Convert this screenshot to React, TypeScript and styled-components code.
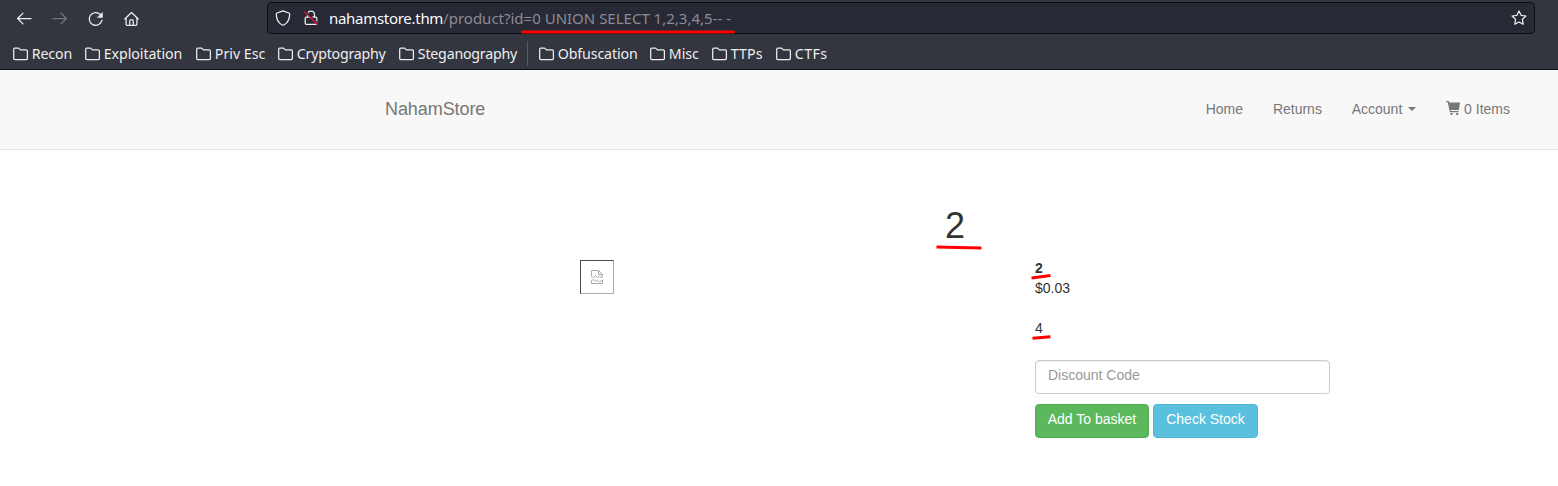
import React from 'react';
import styled, { createGlobalStyle } from 'styled-components';

const GlobalStyle = createGlobalStyle`
  *, *::before, *::after { box-sizing: border-box; }
  body { margin: 0; background: #fff; overflow: hidden; }
`;

const Page = styled.div`
  position: relative;
  width: 1558px;
  height: 486px;
  overflow: hidden;
  background: #fff;
  color: #333;
  font: 14px/20px "Liberation Sans", Arial, sans-serif;
`;

const Chrome = styled.header`
  height: 70px;
  background: #33363f;
  border-bottom: 1px solid #0c0d12;
  color: #eeeeef;
  font-family: "Noto Sans", sans-serif;
`;

const Toolbar = styled.div`
  display: flex;
  height: 38px;
  padding: 2px 23px 0 16px;
`;

const NavButtons = styled.div`
  display: flex;
  gap: 20px;
  width: 251px;
  padding-top: 9px;
`;

const Icon = styled.svg<{ $dim?: boolean }>`
  display: block;
  flex: none;
  fill: none;
  stroke: ${(p) => (p.$dim ? '#74767c' : '#eeeeef')};
  stroke-width: 1.25;
  stroke-linecap: round;
  stroke-linejoin: round;
`;

const AddressBar = styled.div`
  display: flex;
  flex: 1;
  align-items: center;
  height: 32px;
  padding: 0 7px;
  border: 1px solid #0c0d12;
  border-radius: 4px;
  background: #272935;
`;

const LockIcon = styled(Icon)`
  margin-left: 12px;
`;

const Url = styled.div`
  flex: 1;
  margin-left: 10px;
  white-space: pre;
  font-size: 15px;
  line-height: 20px;
  color: #8b8c95;
`;

const UrlPart = styled.span<{ $spacing: number; $strong?: boolean }>`
  letter-spacing: ${(p) => p.$spacing}px;
  color: ${(p) => (p.$strong ? '#fbfbfe' : 'inherit')};
`;

const Bookmarks = styled.nav`
  display: flex;
  align-items: center;
  height: 31px;
  padding-left: 12px;
`;

const Bookmark = styled.div<{ $width: number; $spacing: number }>`
  display: flex;
  flex: none;
  align-items: center;
  gap: 2.8px;
  width: ${(p) => p.$width}px;
  font-size: 14.2px;
  line-height: 20px;
  letter-spacing: ${(p) => p.$spacing}px;
  white-space: nowrap;
`;

const Separator = styled.div`
  width: 1px;
  height: 25px;
  margin-right: 10px;
  background: #5b5d64;
`;

const StoreNav = styled.nav`
  display: flex;
  align-items: center;
  justify-content: space-between;
  height: 80px;
  padding: 0 48px 2px 385px;
  border-bottom: 1px solid #e7e7e7;
  background: #f8f8f8;
  color: #777;
`;

const Brand = styled.div`
  font-size: 18px;
  line-height: 20px;
  letter-spacing: -0.08px;
`;

const Menu = styled.div`
  display: flex;
  gap: 29.8px;
`;

const MenuItem = styled.div`
  display: flex;
  align-items: center;
  white-space: nowrap;
`;

const Caret = styled.span`
  margin-left: 6px;
  border-top: 4px solid #777;
  border-right: 4px solid transparent;
  border-left: 4px solid transparent;
`;

const CartIcon = styled.svg`
  margin: -2px 4px 0 0;
  fill: #777;
  stroke: #777;
`;

const Product = styled.main`
  width: 1170px;
  margin-left: 370px;
  padding-top: 56px;
`;

const Title = styled.h1`
  margin: 0;
  height: 52px;
  font-size: 36px;
  font-weight: 400;
  line-height: 40px;
  text-align: center;
`;

const Columns = styled.div`
  display: grid;
  grid-template-columns: 454px 295px;
  column-gap: 211px;
`;

const MissingImage = styled.div`
  display: grid;
  place-items: center;
  justify-self: center;
  width: 34px;
  height: 34px;
  margin-top: 2px;
  border: 1px solid;
  border-color: #4b4b4b #acacac #acacac #4b4b4b;
`;

const Details = styled.div`
  display: flex;
  flex-direction: column;
`;

const Name = styled.strong`
  font-weight: 700;
`;

const Description = styled.p`
  margin: 20px 0 22px;
`;

const Discount = styled.input`
  width: 100%;
  height: 34px;
  padding: 4px 12px 8px;
  border: 1px solid #ccc;
  border-radius: 4px;
  box-shadow: inset 0 1px 1px rgba(0, 0, 0, 0.075);
  font: inherit;
  &::placeholder { color: #999; opacity: 1; }
`;

const Actions = styled.div`
  display: flex;
  gap: 4px;
  margin-top: 10px;
`;

const Button = styled.button<{ $bg: string; $edge: string; $width: number }>`
  width: ${(p) => p.$width}px;
  height: 34px;
  padding: 0 0 4px;
  border: 1px solid ${(p) => p.$edge};
  border-radius: 4px;
  background: ${(p) => p.$bg};
  color: #fff;
  font: inherit;
  white-space: nowrap;
`;

const Markup = styled.svg`
  position: absolute;
  inset: 0;
  pointer-events: none;
  stroke: #f00;
  stroke-width: 3;
`;

const folders = [
  { name: 'Recon', width: 72, spacing: -0.15 },
  { name: 'Exploitation', width: 111, spacing: -0.07 },
  { name: 'Priv Esc', width: 82, spacing: 0 },
  { name: 'Cryptography', width: 121, spacing: -0.23 },
  { name: 'Steganography', width: 129, spacing: -0.2 },
  { name: 'Obfuscation', width: 111, spacing: -0.13 },
  { name: 'Misc', width: 62, spacing: 0 },
  { name: 'TTPs', width: 64, spacing: 0.1 },
  { name: 'CTFs', width: 60, spacing: 0.4 },
];

const Folder = () => (
  <Icon width="17" height="16" viewBox="0 0 17 16">
    <path d="M1.7 12.6V3.2q0-1 1-1h3.7q.5 0 .8.4l1.2 1.3h5.9q1.1 0 1.1 1.1v7.6q0 1.1-1.1 1.1H2.8q-1.1 0-1.1-1.1Z" />
  </Icon>
);

export default function App() {
  return (
    <Page>
      <GlobalStyle />
      <Chrome>
        <Toolbar>
          <NavButtons>
            <Icon width="16" height="16"><path d="M15 7.500H1.800M7 2.100 1.600 7.500 7 12.900" /></Icon>
            <Icon $dim width="16" height="16"><path d="M1 7.500h13.200M9 2.100 14.400 7.500 9 12.900" /></Icon>
            <Icon width="16" height="16">
              <path d="M14 9.1a6.400 6.400 0 1 1-1.700-5.600l1.200 1.200" />
              <path d="M14.400 1.700v4.700H9.700Z" fill="#eeeeef" strokeWidth="0.6" />
            </Icon>
            <Icon width="16" height="16">
              <path d="M.8 8 7.500 1.500 14.200 8M2.100 7v6.200q0 1.100 1.100 1.100h8.600q1.100 0 1.100-1.100V7M5.700 14V10.100q0-1.500 1.800-1.500t1.800 1.500V14" />
            </Icon>
          </NavButtons>
          <AddressBar>
            <Icon width="16" height="16">
              <path d="M8 .8 14 3q.7.2.7 1-.1 7.7-5.5 10.800-1.200.7-2.400 0Q1.400 11.700 1.300 4q0-.8.7-1Z" />
            </Icon>
            <LockIcon width="16" height="16">
              <path d="M4.500 7V4.500a3.500 3.500 0 0 1 7 0V7M3.400 7h9.200q1.200 0 1.200 1.200v5q0 1.200-1.200 1.200H3.400q-1.200 0-1.200-1.200v-5Q2.200 7 3.400 7Z" />
              <path d="M2 1 15 13.500" stroke="#272935" strokeWidth="1.500" />
              <path d="M1.500 2 14.500 14.500" stroke="#e3173d" />
            </LockIcon>
            <Url>
              <UrlPart $strong $spacing={-0.29}>nahamstore.thm</UrlPart>
              <UrlPart $spacing={0}>/product?id=0 UNION SELECT 1,2,3,4,5-- -</UrlPart>
            </Url>
            <Icon width="16" height="16">
              <path d="m8 1 2.100 4.300 4.800.7-3.500 3.400.8 4.900L8 12l-4.200 2.300.8-4.900L1.100 6l4.800-.7Z" />
            </Icon>
          </AddressBar>
        </Toolbar>
        <Bookmarks>
          {folders.map((f, i) => (
            <React.Fragment key={f.name}>
              {i === 5 && <Separator />}
              <Bookmark $width={f.width} $spacing={f.spacing}><Folder /><span>{f.name}</span></Bookmark>
            </React.Fragment>
          ))}
        </Bookmarks>
      </Chrome>
      <StoreNav>
        <Brand>NahamStore</Brand>
        <Menu>
          <MenuItem>Home</MenuItem>
          <MenuItem>Returns</MenuItem>
          <MenuItem>Account<Caret /></MenuItem>
          <MenuItem>
            <CartIcon width="14" height="14">
              <path d="M2.400 1.500H14l-1.100 7.500H4.200Z" stroke="none" />
              <path d="M.3.700h2l2.100 10h8.200" fill="none" strokeWidth="1.300" />
              <path d="M4.500 12h2v2h-2ZM10.200 12h2v2h-2Z" stroke="none" />
            </CartIcon>
            0 Items
          </MenuItem>
        </Menu>
      </StoreNav>
      <Product>
        <Title>2</Title>
        <Columns>
          <MissingImage>
            <svg width="14" height="16" fill="none" stroke="#aaa">
              <path d="M1.500 7.500V1.500h7l4 4V8M8.500 1.500v4h4M1.500 7.500l2 1 2-2 2 2.500 2-2 3 2M1.500 14.500v-3l2-1 2 2 2-1.500 2 2 3-2v3.500Z" />
            </svg>
          </MissingImage>
          <Details>
            <Name>2</Name>
            <span>$0.03</span>
            <Description>4</Description>
            <Discount placeholder="Discount Code" />
            <Actions>
              <Button $bg="#5cb85c" $edge="#4cae4c" $width={114}>Add To basket</Button>
              <Button $bg="#5bc0de" $edge="#46b8da" $width={105}>Check Stock</Button>
            </Actions>
          </Details>
        </Columns>
      </Product>
      <Markup width="1558" height="486">
        <path d="M521.500 32H734.500M936.500 247l45 1M1031.500 278l19-2.500M1032.500 338.200l18-1.400" />
      </Markup>
    </Page>
  );
}
